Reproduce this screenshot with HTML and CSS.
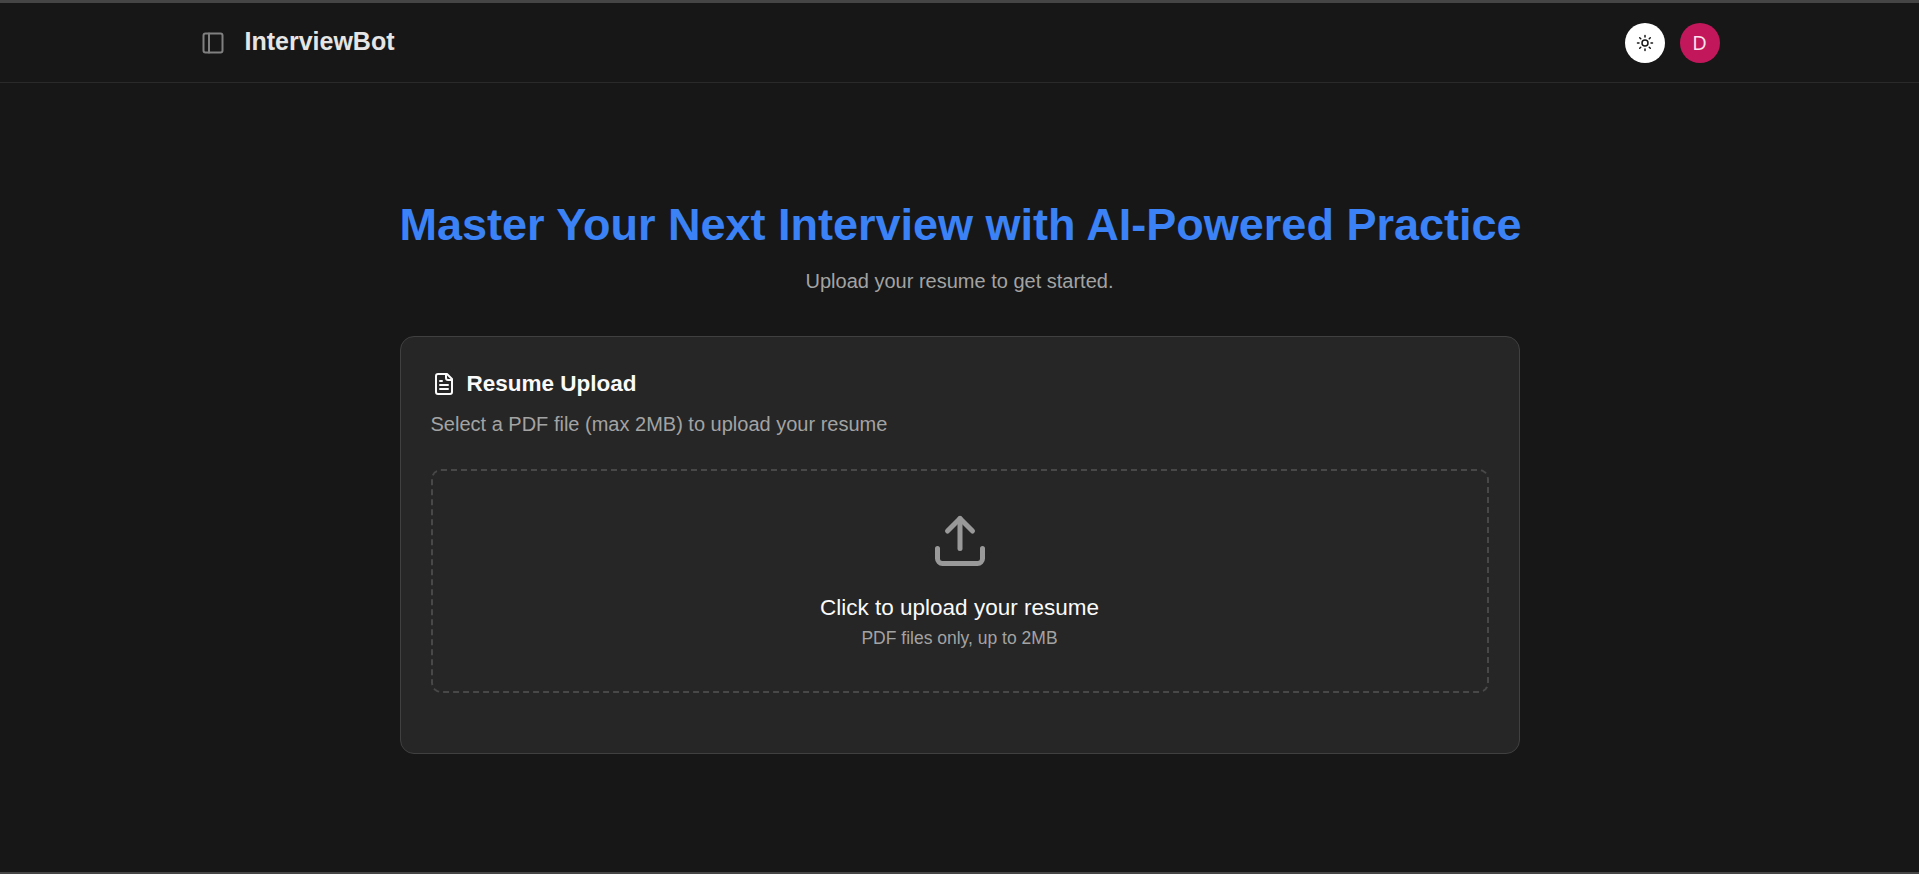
FILE: index.html
```html
<!DOCTYPE html>
<html lang="en">
<head>
    <meta charset="UTF-8">
    <meta name="viewport" content="width=device-width, initial-scale=1.0">
    <title>InterviewBot</title>
    <link rel="stylesheet" href="styles.css">
</head>
<body>
    <div class="page">
        <!-- Header -->
        <header class="topbar">
            <div class="topbar-inner">
                <div class="brand">
                    <svg class="sidebar-icon" width="24" height="24" viewBox="0 0 24 24" fill="none" stroke="currentColor" stroke-width="2" stroke-linecap="round" stroke-linejoin="round">
                        <rect x="2.5" y="2.5" width="19" height="19" rx="2"></rect>
                        <path d="M8 2.5v19"></path>
                    </svg>
                    <span class="brand-name">InterviewBot</span>
                </div>
                <div class="actions">
                    <button class="theme-btn" type="button" aria-label="Toggle theme">
                        <svg width="18" height="18" viewBox="0 0 24 24" fill="none" stroke="currentColor" stroke-width="2" stroke-linecap="round" stroke-linejoin="round">
                            <circle cx="12" cy="12" r="4"></circle>
                            <path d="M12 2v2M12 20v2M4.93 4.93l1.41 1.41M17.66 17.66l1.41 1.41M2 12h2M20 12h2M6.34 17.66l-1.41 1.41M19.07 4.93l-1.41 1.41"></path>
                        </svg>
                    </button>
                    <div class="avatar">D</div>
                </div>
            </div>
        </header>

        <!-- Main content -->
        <main class="main">
            <h1 class="headline">Master Your Next Interview with AI-Powered Practice</h1>
            <p class="subhead">Upload your resume to get started.</p>

            <section class="card">
                <h2 class="card-title">
                    <svg class="title-icon" width="24" height="24" viewBox="0 0 24 24" fill="none" stroke="currentColor" stroke-width="2" stroke-linecap="round" stroke-linejoin="round">
                        <path d="M15 2H6a2 2 0 0 0-2 2v16a2 2 0 0 0 2 2h12a2 2 0 0 0 2-2V7z"></path>
                        <path d="M14 2v4a2 2 0 0 0 2 2h4"></path>
                        <path d="M10 9H8M16 13H8M16 17H8"></path>
                    </svg>
                    Resume Upload
                </h2>
                <p class="card-desc">Select a PDF file (max 2MB) to upload your resume</p>

                <label class="dropzone">
                    <svg class="upload-icon" width="60" height="60" viewBox="0 0 24 24" fill="none" stroke="currentColor" stroke-width="2" stroke-linecap="round" stroke-linejoin="round">
                        <path d="M21 15v4a2 2 0 0 1-2 2H5a2 2 0 0 1-2-2v-4"></path>
                        <path d="M17 8l-5-5-5 5"></path>
                        <path d="M12 3v12"></path>
                    </svg>
                    <span class="drop-title">Click to upload your resume</span>
                    <span class="drop-hint">PDF files only, up to 2MB</span>
                </label>
            </section>
        </main>
    </div>
</body>
</html>
```

FILE: styles.css
```css
/* Global */
* {
    box-sizing: border-box;
}

html, body {
    margin: 0;
    padding: 0;
    height: 100%;
    background-color: #171717;
    color: #fafafa;
    font-family: "Liberation Sans", Arial, sans-serif;
    overflow: hidden;
}

.page {
    height: 100%;
    display: flex;
    flex-direction: column;
    border-top: 3px solid #454545;
    border-bottom: 2px solid #454545;
}

/* Header */
.topbar {
    height: 80px;
    flex-shrink: 0;
    border-bottom: 1px solid #2a2a2a;
}

.topbar-inner {
    height: 100%;
    width: 1536px;
    margin: 0 auto;
    padding: 0 8px 0 9px;
    display: flex;
    align-items: center;
    justify-content: space-between;
}

.brand {
    display: flex;
    align-items: center;
    gap: 20px;
}

.sidebar-icon {
    color: #808080;
}

.brand-name {
    padding-bottom: 2px;
    font-size: 25px;
    font-weight: 700;
    color: #e5e5e5;
}

.actions {
    display: flex;
    align-items: center;
    gap: 15px;
}

.theme-btn {
    width: 40px;
    height: 40px;
    padding: 0;
    border: 0;
    border-radius: 50%;
    background: #fff;
    color: #171717;
    display: flex;
    align-items: center;
    justify-content: center;
}

.avatar {
    width: 40px;
    height: 40px;
    border-radius: 50%;
    background: #c2185b;
    color: #fce4ec;
    font-family: "Open Sans", sans-serif;
    font-size: 20px;
    display: flex;
    align-items: center;
    justify-content: center;
}

/* Main */
.main {
    width: 1120px;
    margin: 0 auto;
    padding-top: 114px;
    display: flex;
    flex-direction: column;
    align-items: center;
}

.headline {
    margin: 0;
    padding-left: 2px;
    font-size: 45px;
    line-height: 56px;
    font-weight: 700;
    color: #3b82f6;
    white-space: nowrap;
}

.subhead {
    margin: 14px 0 0;
    font-size: 20px;
    line-height: 28px;
    color: #a3a3a3;
}

/* Card */
.card {
    width: 100%;
    height: 418px;
    margin-top: 41px;
    padding: 31px 30px;
    background: #262626;
    border: 1px solid #404040;
    border-radius: 14px;
}

.card-title {
    margin: 0;
    display: flex;
    align-items: center;
    gap: 11px;
    font-size: 22.5px;
    line-height: 32px;
    font-weight: 700;
    color: #fafafa;
}

.title-icon {
    margin-left: 1px;
}

.card-desc {
    margin: 10px 0 0;
    font-size: 20px;
    line-height: 28px;
    color: #a3a3a3;
}

.dropzone {
    height: 224px;
    margin-top: 31px;
    padding-bottom: 2px;
    border: 2px dashed #484848;
    border-radius: 10px;
    display: flex;
    flex-direction: column;
    align-items: center;
    justify-content: center;
}

.upload-icon {
    color: #999;
    margin-bottom: 22px;
}

.drop-title {
    font-size: 22.5px;
    line-height: 30px;
    color: #fafafa;
}

.drop-hint {
    margin-top: 3px;
    font-size: 17.5px;
    line-height: 24px;
    color: #a3a3a3;
}
```
